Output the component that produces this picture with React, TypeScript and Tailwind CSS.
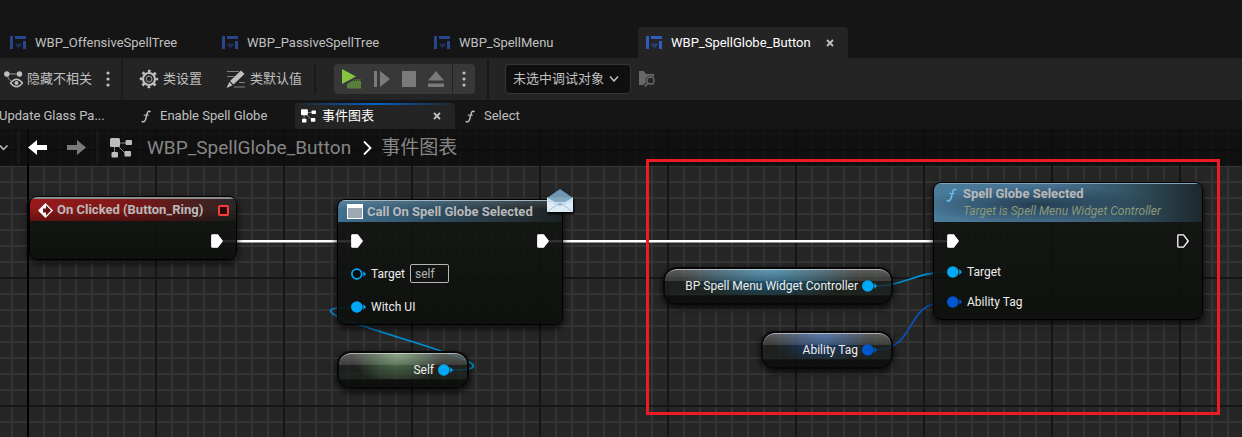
import React from "react";

const WidgetIcon = ({ active = false }: { active?: boolean }) => (
  <svg viewBox="0 0 16 13" className={`h-[13px] w-4 shrink-0 ${active ? "text-[#2f5cbd]" : "text-[#27468c]"}`} fill="currentColor" aria-hidden="true">
    <path d="M0 0h3v13H0zM5 0h11v3H5zM13 5h3v8h-3z" />
    <path d="M8.500 12.200 5.300 9.200V7.800Q6 7 7 7l1.500 1L10 7q1 0 1.700.8v1.400z" opacity=".5" />
  </svg>
);

const GraphIcon = ({ className = "" }: { className?: string }) => (
  <svg viewBox="0 0 22 20" className={className} fill="currentColor" aria-hidden="true">
    <path d="M4.500 5v11M5 5h14M6 6l11 11" stroke="currentColor" strokeWidth="1" fill="none" opacity=".7" />
    <rect x="0" y="0" width="10" height="9" rx="1.500" />
    <rect x="15.500" y="2" width="6.500" height="5" rx="1" />
    <rect x="1.500" y="14" width="6.500" height="5.500" rx="1" />
    <rect x="14.500" y="13" width="6.500" height="5.500" rx="1" />
  </svg>
);

const FuncIcon = ({ className = "" }: { className?: string }) => (
  <svg viewBox="0 0 11 14" className={className} fill="none" stroke="currentColor" aria-hidden="true">
    <path d="M10.300 2.200C9.600.7 7.700.8 7 3L5 10.500C4.400 12.800 2.300 13.600.8 12.200" strokeWidth="1.600" />
    <path d="M3 5.500h5.500" strokeWidth="1.200" />
  </svg>
);

const CloseIcon = () => (
  <svg viewBox="0 0 8 8" className="size-2" stroke="currentColor" strokeWidth="1.800" aria-hidden="true">
    <path d="M1 1l6 6M7 1L1 7" />
  </svg>
);

const Dots = () => (
  <svg viewBox="0 0 4 16" className="h-4 w-1" fill="currentColor" aria-hidden="true">
    <circle cx="2" cy="2" r="1.600" />
    <circle cx="2" cy="8" r="1.600" />
    <circle cx="2" cy="14" r="1.600" />
  </svg>
);

const HideIcon = () => (
  <svg viewBox="0 0 19 17" className="h-[17px] w-[19px]" fill="currentColor" aria-hidden="true">
    <circle cx="2.800" cy="3" r="2.700" />
    <circle cx="15.500" cy="3" r="2.700" />
    <path d="M3 3h13M3 3q.5 5.500 4.500 7.500" fill="none" stroke="currentColor" opacity=".75" />
    <path d="M6.500 12q6-7.500 12 0-6 7.500-12 0z" fill="#242424" stroke="currentColor" strokeWidth="1.300" />
    <circle cx="12.500" cy="12" r="2" />
  </svg>
);

const GearIcon = () => (
  <svg viewBox="0 0 20 20" className="size-5" fill="none" stroke="currentColor" aria-hidden="true">
    <circle cx="10" cy="10" r="6" strokeWidth="2.200" />
    <circle cx="10" cy="10" r="7.900" strokeWidth="2.600" strokeDasharray="2.700 3.505" strokeDashoffset="1.350" />
    <circle cx="10" cy="10" r="2.800" strokeWidth="1.200" opacity=".65" />
  </svg>
);

const PencilIcon = () => (
  <svg viewBox="0 0 20 18" className="h-[18px] w-5" aria-hidden="true">
    <path d="M1 1.500h12M1 6.500h7M13 12.500h6M8 17h11" stroke="currentColor" opacity=".6" />
    <path d="M15 .5 18.500 4 7.500 14.500 4 11zM3.300 12l3.200 3.200L.5 18z" fill="currentColor" />
  </svg>
);

const ExecPin = ({ hollow = false }: { hollow?: boolean }) => (
  <svg viewBox="0 0 12 14" className="h-[14px] w-3 shrink-0" aria-hidden="true">
    <path d="M1.500.8h5L11.200 7l-4.700 6.200h-5Q.8 13.200.8 12.500v-11Q.8.8 1.500.8z" fill={hollow ? "none" : "#fff"} stroke="#fff" strokeWidth="1.300" strokeLinejoin="round" />
  </svg>
);

const DataPin = ({ color, hollow = false }: { color: string; hollow?: boolean }) => (
  <svg viewBox="0 0 15 12" className="h-3 w-[15px] shrink-0" aria-hidden="true">
    <path d="M12.300 3 15 6l-2.700 3z" fill={color} />
    <circle cx="5.800" cy="6" r={hollow ? 4.900 : 5.800} fill={hollow ? "#080c0d" : color} stroke={color} strokeWidth={hollow ? 1.800 : 0} />
  </svg>
);

const EventIcon = () => (
  <svg viewBox="0 0 15 15" className="size-[15px] shrink-0" aria-hidden="true">
    <path d="M7.500 0 15 7.500 7.500 15 0 7.500z" fill="#fff" />
    <path d="M8 2.300 13.200 7.500 8 12.700V9.500H5v-4h3z" fill="#671414" />
  </svg>
);

const Envelope = () => (
  <svg viewBox="0 0 26 24" className="h-6 w-[26px] drop-shadow-[1px_2px_1px_#000]" aria-hidden="true">
    <path d="M0 9 13 0l13 9v6H0z" fill="#6f97b4" />
    <path d="M0 8.500V23h26V8.500L18 14H8z" fill="#dcebf5" />
    <path d="M0 8.500h26L15 16q-2 1.500-4 0z" fill="#84a8c1" />
    <path d="M0 8.500V12l9 4 4-1 4 1 9-4V8.500L18 13H8z" fill="#c8deec" />
    <path d="M0 23l11-8q2-1.300 4 0l11 8" fill="none" stroke="#9db8ca" strokeWidth=".8" />
  </svg>
);

const CYAN = "#00a8f6";
const BLUE = "#0058cf";

const topTabs = ["WBP_OffensiveSpellTree", "WBP_PassiveSpellTree", "WBP_SpellMenu"];

const nodeShell =
  "absolute overflow-hidden rounded-lg border border-black bg-[linear-gradient(#121512d8,#0c0f0cec)] shadow-[0_3px_6px_1px_#000a]";
const title = "text-[13px] leading-4 font-bold text-[#b9b9b9]";

function VariableNode({ name, color, place, glow }: { name: string; color: string; place: string; glow: string }) {
  return (
    <div className={`absolute flex h-[38px] items-center justify-end gap-1 overflow-hidden rounded-[14px] border-2 border-[#080808] pr-[14px] shadow-[0_3px_6px_1px_#000a] ${place}`}>
      <div className="absolute inset-0 bg-[linear-gradient(#191c19b0_0%,#1b201bc0_75%,#0a0d0ae0_80%)]" />
      <div className={`absolute inset-x-0 top-0 h-[26px] ${glow}`} />
      <div className="absolute inset-x-0 top-0 h-3 bg-[linear-gradient(#ffffff48,#ffffff20)]" />
      <div className="absolute inset-0 rounded-xl border-t border-[#ffffff80]" />
      <span className="relative whitespace-nowrap">{name}</span>
      <span className="relative flex"><DataPin color={color} /></span>
    </div>
  );
}

export default function App() {
  return (
    <main className="flex min-h-screen flex-col overflow-hidden bg-[#151515] font-[Roboto,'Noto_Sans_CJK_SC',sans-serif] text-[13px] leading-4 text-[#c0c0c0]">
      <nav className="flex h-[58px] items-end pl-[2px]">
        {topTabs.map((t) => (
          <button key={t} className="flex h-[31px] w-[212px] shrink-0 items-center gap-[9px] pl-2">
            <WidgetIcon />
            {t}
          </button>
        ))}
        <div className="flex h-[31px] w-[210px] shrink-0 items-center justify-between rounded-t bg-[#242424] pr-[14px] pl-2 text-white">
          <button className="flex items-center gap-[9px]">
            <WidgetIcon active />
            WBP_SpellGlobe_Button
          </button>
          <button aria-label="关闭" className="text-[#c0c0c0]"><CloseIcon /></button>
        </div>
      </nav>

      <div className="flex h-[42px] items-center bg-[#242424]">
        <button className="flex shrink-0 items-center gap-1 pl-1"><HideIcon />隐藏不相关</button>
        <button aria-label="更多选项" className="ml-[14px]"><Dots /></button>
        <div className="ml-[11px] h-10 w-[2px] bg-[#191919]" />
        <button className="ml-4 flex shrink-0 items-center gap-1"><GearIcon />类设置</button>
        <button className="ml-6 flex shrink-0 items-center gap-1"><PencilIcon />类默认值</button>
        <div className="ml-3 h-[30px] w-[2px] bg-[#191919]" />
        <div className="ml-[18px] flex h-[30px] shrink-0 overflow-hidden rounded bg-[#383838] text-[#7a7a7a]">
          <div className="flex w-[118px] items-center justify-between pr-2 pl-2">
            <button aria-label="播放">
              <svg viewBox="0 0 20 20" className="size-5" aria-hidden="true">
                <path d="M0 0 14 7.500 0 15z" fill="#85c440" />
                <path d="M5 19.500V15l8-4.500h6v9z" fill="#5a7e3b" />
                <path d="M12 11.500h7" stroke="#2f3d28" strokeDasharray="1 1" />
              </svg>
            </button>
            <button aria-label="跳过帧">
              <svg viewBox="0 0 16 16" className="size-4" fill="currentColor" aria-hidden="true"><path d="M0 0h3v16H0zM6 0l10 8-10 8z" /></svg>
            </button>
            <button aria-label="停止"><span className="block h-4 w-[14px] bg-current" /></button>
            <button aria-label="弹出">
              <svg viewBox="0 0 16 16" className="size-4" fill="currentColor" aria-hidden="true"><path d="M8 0l8 9.500H0zM0 12.500h16V16H0z" /></svg>
            </button>
          </div>
          <button aria-label="播放选项" className="flex w-[23px] items-center justify-center border-l border-[#242424] text-[#c0c0c0]"><Dots /></button>
        </div>
        <div className="ml-3 h-10 w-[2px] bg-[#191919]" />
        <div className="relative ml-4 shrink-0">
          <select aria-label="调试对象" className="h-[30px] w-[126px] appearance-none rounded border border-[#353535] bg-[#0f0f0f] pl-[7px] text-[13px]">
            <option>未选中调试对象</option>
          </select>
          <svg viewBox="0 0 10 6" className="pointer-events-none absolute top-3 right-3 h-[6px] w-[10px]" fill="none" stroke="currentColor" strokeWidth="1.500" aria-hidden="true"><path d="M1 .5l4 4.500L9 .5" /></svg>
        </div>
        <button aria-label="查找调试对象" className="ml-2 text-[#686868]">
          <svg viewBox="0 0 17 16" className="h-4 w-[17px]" aria-hidden="true">
            <path d="M0 0h5l2 3h8v11H0z" fill="currentColor" />
            <circle cx="11.500" cy="9.500" r="3.900" fill="#242424" stroke="#242424" strokeWidth="2" />
            <path d="M9 12l-3.500 4" stroke="#242424" strokeWidth="4" />
            <circle cx="11.500" cy="9.500" r="3.600" fill="none" stroke="currentColor" strokeWidth="1.600" />
            <path d="M9 12l-3 3.500" stroke="currentColor" strokeWidth="1.800" />
          </svg>
        </button>
      </div>

      <nav className="flex h-[29px] items-end">
        <button className="-ml-px flex h-[26px] w-[142px] shrink-0 items-center">Update Glass Pa...</button>
        <button className="flex h-[26px] w-[154px] shrink-0 items-center gap-[9px]"><FuncIcon className="h-[13px] w-[10px]" />Enable Spell Globe</button>
        <div className="flex h-[26px] w-[160px] shrink-0 flex-col overflow-hidden rounded-t bg-[#242424] text-white">
          <div className="h-[2px] shrink-0 bg-[linear-gradient(90deg,#242424,#0064c8_50%,#242424)]" />
          <div className="flex flex-1 items-center justify-between pr-[14px] pb-[2px] pl-[6px]">
            <button className="flex items-center gap-[6px]"><GraphIcon className="h-[14px] w-[15px]" />事件图表</button>
            <button aria-label="关闭" className="text-[#c0c0c0]"><CloseIcon /></button>
          </div>
        </div>
        <button className="ml-[10px] flex h-[26px] items-center gap-[9px]"><FuncIcon className="h-[13px] w-[10px]" />Select</button>
      </nav>

      <section className="relative min-h-[308px] flex-1 overflow-hidden bg-[#262626] text-[12px] text-[#ededed]">
        <svg className="absolute inset-0 size-full" aria-hidden="true">
          <defs>
            <pattern id="minor" x="11" y="4" width="16" height="16" patternUnits="userSpaceOnUse">
              <path d="M0 0h16v2H2v14H0z" fill="#343434" />
            </pattern>
            <pattern id="major" x="27" y="20" width="128" height="128" patternUnits="userSpaceOnUse">
              <path d="M0 0h128v2H2v126H0z" fill="#161616" />
            </pattern>
          </defs>
          <rect width="100%" height="100%" fill="url(#minor)" />
          <rect width="100%" height="100%" fill="url(#major)" />
          <rect x="27" width="2" height="100%" fill="#000" />
          <g fill="none" strokeWidth="1.700">
            <path d="M223 112.300H352M549 112.300H947" stroke="#fff" strokeWidth="2.500" />
            <path d="M450 241C559 241 245 178 354 178" stroke="#0090d6" />
            <path d="M874 157C904 157 917 143 947 143" stroke="#0090d6" />
            <path d="M874 221C919 221 902 173 947 173" stroke="#0753b5" />
          </g>
        </svg>

        <header className="absolute inset-x-0 top-0 flex h-[37px] items-center bg-[#0b0b0bcc] text-[19px] leading-6 text-[#868686]">
          <svg viewBox="0 0 8 6" className="h-[6px] w-2 shrink-0" fill="none" stroke="#c0c0c0" strokeWidth="1.500" aria-hidden="true"><path d="M0 .5l3.500 4L7.500.5" /></svg>
          <div className="ml-[9px] h-[33px] w-[3px] bg-[#181818]" />
          <button aria-label="后退" className="ml-2 text-white">
            <svg viewBox="0 0 19 15" className="h-[15px] w-[19px]" fill="currentColor" aria-hidden="true"><path d="M0 7.500 9 0v5h10v5H9v5z" /></svg>
          </button>
          <button aria-label="前进" className="ml-5 text-[#7a7a7a]">
            <svg viewBox="0 0 19 15" className="h-[15px] w-[19px]" fill="currentColor" aria-hidden="true"><path d="M19 7.500 10 0v5H0v5h10v5z" /></svg>
          </button>
          <div className="ml-[10px] h-[33px] w-[3px] bg-[#181818]" />
          <GraphIcon className="ml-[11px] h-5 w-[22px] shrink-0 text-[#bdbdbd]" />
          <a href="#asset" className="ml-[15px]">WBP_SpellGlobe_Button</a>
          <svg viewBox="0 0 9 14" className="mr-[9px] ml-3 h-[14px] w-[9px] shrink-0" fill="none" stroke="#fff" strokeWidth="1.800" aria-hidden="true"><path d="M1 .5 7.500 7 1 13.500" /></svg>
          <span>事件图表</span>
        </header>

        <article className={`${nodeShell} top-[67px] left-[29px] h-[64px] w-[208px]`}>
          <div className="flex h-6 items-center justify-between border-t-2 border-[#8d8d8d] bg-[linear-gradient(#0000_40%,#0005),linear-gradient(90deg,#981a1a,#801818_45%,#5c1c1c_70%,#282826)] pr-[7px] pl-2">
            <h2 className={`flex items-center gap-1 ${title}`}><EventIcon />On Clicked (Button_Ring)</h2>
            <span className="size-[11px] rounded-[2px] border-2 border-[#f93b3b] bg-[#2a0808]" />
          </div>
          <div className="flex h-10 items-center justify-end pr-[13px]"><ExecPin /></div>
        </article>

        <article className={`${nodeShell} top-[70px] left-[337px] h-[126px] w-[226px]`}>
          <div className="flex h-[22px] items-center border-t border-[#9fb5c4] bg-[linear-gradient(#fff2,#0000_40%),linear-gradient(90deg,#41718f,#2d4d62_45%,#2a3942_70%,#1b2022)] pl-[9px]">
            <h2 className={`flex items-center gap-1 ${title}`}>
              <svg viewBox="0 0 16 15" className="h-[15px] w-4" aria-hidden="true"><path d="M0 0h16v15H0z" fill="#fff" /><path d="M1 4h14v10H1z" fill="#9ca9b3" /></svg>
              Call On Spell Globe Selected
            </h2>
          </div>
          <div className="px-[13px] pt-[3px]">
            <div className="flex h-8 items-center justify-between"><ExecPin /><ExecPin /></div>
            <label className="flex h-[33px] items-center gap-[5px]">
              <DataPin color={CYAN} hollow />
              Target
              <input defaultValue="self" className="h-[19px] w-[39px] rounded-[2px] border border-[#b5b5b5] bg-transparent pl-1 text-[12px] text-[#b5b5b5]" />
            </label>
            <div className="flex h-[33px] items-center gap-[5px]"><DataPin color={CYAN} />Witch UI</div>
          </div>
        </article>
        <div className="absolute top-[60px] left-[547px]"><Envelope /></div>

        <VariableNode name="Self" color={CYAN} place="left-[337px] top-[222px] w-[132px]" glow="bg-[radial-gradient(ellipse_36%_130%_at_46%_0%,#8fc084a0,#5c845880_50%,transparent)]" />
        <VariableNode name="BP Spell Menu Widget Controller" color={CYAN} place="left-[663px] top-[138px] w-[230px]" glow="bg-[radial-gradient(ellipse_40%_130%_at_46%_0%,#2899d0b0,#20688c90_50%,transparent)]" />
        <VariableNode name="Ability Tag" color={BLUE} place="left-[761px] top-[202px] w-[132px]" glow="bg-[radial-gradient(ellipse_40%_130%_at_46%_0%,#2460c0b0,#1d458a80_50%,transparent)]" />

        <article className={`${nodeShell} top-[53px] left-[933px] h-[138px] w-[270px]`}>
          <div className="flex h-[39px] gap-[6px] border-t border-[#7aa5bf] bg-[radial-gradient(ellipse_45%_50%_at_38%_55%,#142633b0,transparent),linear-gradient(90deg,#4a7c9c,#47708f_45%,#355668_70%,#1c282c)] pl-3">
            <FuncIcon className="mt-1 h-[14px] w-[11px] shrink-0 text-[#68b9f0]" />
            <div>
              <h2 className={`${title} pt-[2px]`}>Spell Globe Selected</h2>
              <p className="text-[12px] leading-[18px] text-[#8b9879] italic">Target is Spell Menu Widget Controller</p>
            </div>
          </div>
          <div className="px-[13px] pt-[3px]">
            <div className="flex h-8 items-center justify-between"><ExecPin /><ExecPin hollow /></div>
            <div className="flex h-[30px] items-center gap-[5px]"><DataPin color={CYAN} />Target</div>
            <div className="flex h-[30px] items-center gap-[5px]"><DataPin color={BLUE} />Ability Tag</div>
          </div>
        </article>

        <div className="pointer-events-none absolute top-[30px] left-[646px] h-[256px] w-[574px] border-3 border-[#ed1c24]" />
      </section>
    </main>
  );
}
